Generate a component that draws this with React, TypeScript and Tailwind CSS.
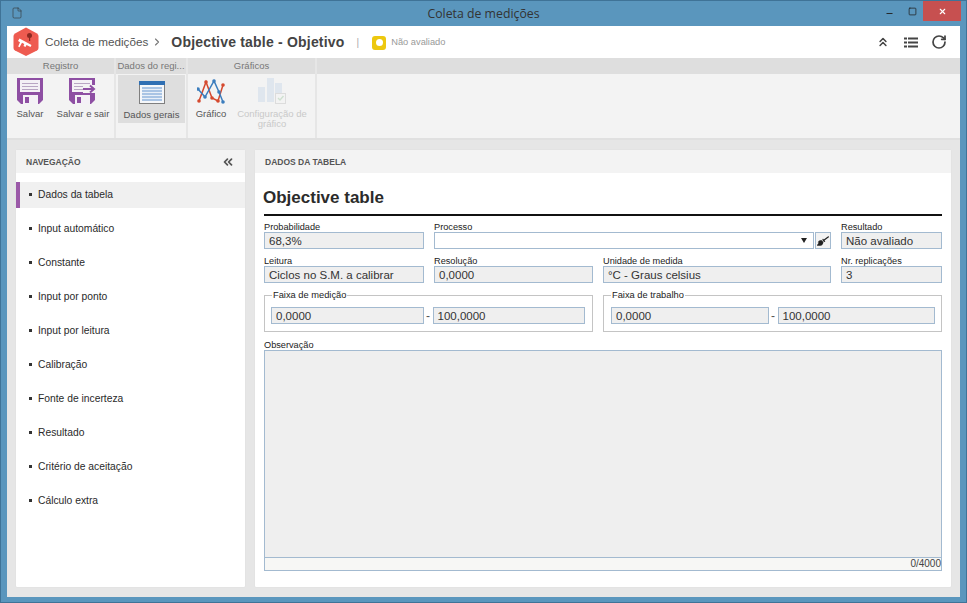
import React from 'react';
import { ChevronsUp, ChevronsLeft, RotateCw, ChevronRight, File, Minus, Square, X } from 'lucide-react';
import { FaBroom } from 'react-icons/fa';

const NAV_ITEMS = [
  'Dados da tabela',
  'Input automático',
  'Constante',
  'Input por ponto',
  'Input por leitura',
  'Calibração',
  'Fonte de incerteza',
  'Resultado',
  'Critério de aceitação',
  'Cálculo extra',
];

const SaveIcon = ({ arrow = false }: { arrow?: boolean }) => (
  <svg width={arrow ? 28 : 26} height="26" viewBox={arrow ? '0 0 28 26' : '0 0 26 26'}>
    <path d="M0 0h26v22l-4 4H4l-4-4z" fill="#8e4fa3" />
    <rect x="3" y="2" width="20" height="12" fill="#f4f1f6" />
    <rect x="5" y="5" width="16" height="1" fill="#b9a6c4" />
    <rect x="5" y="8" width="16" height="1" fill="#b9a6c4" />
    <rect x="5" y="11" width="16" height="1" fill="#b9a6c4" />
    <rect x="6" y="17" width="15" height="9" fill="#f4f1f6" />
    <rect x="8" y="19" width="4" height="6" fill="#8e4fa3" />
    {arrow && (
      <>
        <rect x="14" y="7" width="14" height="8" fill="#f3f3f3" />
        <path d="M14 11h10M21 7.500l4 3.500-4 3.500" stroke="#8e4fa3" strokeWidth="2" fill="none" />
      </>
    )}
  </svg>
);

const TableIcon = () => (
  <svg width="26" height="23" viewBox="0 0 26 23">
    <rect x="0.500" y="0.500" width="25" height="22" fill="#f5f7fa" stroke="#7f7f7f" />
    <rect x="0" y="0" width="26" height="4" fill="#2f6fb3" />
    <rect x="3" y="6" width="20" height="14" fill="#a9c4e4" />
    <path d="M3 8.500h20M3 11.500h20M3 14.500h20M3 17.500h20" stroke="#e8eff8" strokeWidth="1" />
  </svg>
);

const ChartIcon = () => (
  <svg width="28" height="25" viewBox="0 0 28 25">
    <polyline points="2,22 9,3 15,19 21,22 26,6" fill="none" stroke="#d5492e" strokeWidth="1.500" />
    <polyline points="1,10 8,18 17,2 22,13 26,23" fill="none" stroke="#3b7dbd" strokeWidth="1.500" />
    {[[2, 22], [9, 3], [15, 19], [21, 22], [26, 6]].map(([x, y]) => (
      <circle key={`r${x}`} cx={x} cy={y} r="1.800" fill="#d5492e" />
    ))}
    {[[1, 10], [8, 18], [17, 2], [22, 13], [26, 23]].map(([x, y]) => (
      <circle key={`b${x}`} cx={x} cy={y} r="1.800" fill="#3b7dbd" />
    ))}
  </svg>
);

const ChartConfigIcon = () => (
  <svg width="28" height="26" viewBox="0 0 28 26">
    <rect x="0" y="9" width="7" height="15" fill="#dfe6ee" />
    <rect x="9" y="0" width="7" height="24" fill="#dfe6ee" />
    <rect x="17" y="5" width="7" height="12" fill="#dfe6ee" />
    <rect x="17.500" y="15.500" width="10" height="10" fill="#f3f3f3" stroke="#dcdcdc" />
    <path d="M20 20l2 2 3.500-4" fill="none" stroke="#cfe0d0" strokeWidth="1.400" />
  </svg>
);

const Logo = () => (
  <svg width="26" height="30" viewBox="0 0 26 30">
    <path d="M13 0.500l11 6q1.500 1 1.500 2.500v12q0 1.500-1.500 2.500l-11 5.500-11-5.500q-1.500-1-1.500-2.500V9q0-1.500 1.500-2.500z" fill="#ee5b50" />
    <path d="M5 14l1.500-2.500 12 6.500-1 2-4-2-1 2-2-1 .8-2-2.300-1.200-2.500 4.500-1.300-.8 1.800-4.300z" fill="#ffffff" />
    <circle cx="16.500" cy="8.500" r="2.500" fill="#8c2a22" />
    <rect x="16" y="9" width="1.200" height="5" fill="#8c2a22" />
  </svg>
);

const ListIcon = () => (
  <svg width="14" height="11" viewBox="0 0 14 11" fill="#444">
    <rect x="0" y="0.500" width="3" height="2" />
    <rect x="4" y="0.500" width="10" height="2" />
    <rect x="0" y="4.500" width="3" height="2" />
    <rect x="4" y="4.500" width="10" height="2" />
    <rect x="0" y="8.500" width="3" height="2" />
    <rect x="4" y="8.500" width="10" height="2" />
  </svg>
);

const Field = ({ value, className = '' }: { value?: string; className?: string }) => (
  <div className={`h-[17px] border border-[#a3bad0] bg-[#efefef] pl-[4px] text-[11.5px] leading-[17px] text-[#333] whitespace-nowrap ${className}`}>
    {value}
  </div>
);

const Label = ({ text }: { text: string }) => (
  <div className="h-[11px] text-[9.2px] leading-[13px] text-[#222] whitespace-nowrap">{text}</div>
);

const RangeBox = ({ title, a, b, className }: { title: string; a: string; b: string; className: string }) => (
  <div className={`relative h-[37px] border border-[#c4c4c4] flex items-center ${className}`}>
    <span className="absolute left-[7px] -top-[6px] bg-white px-[1px] text-[9.3px] leading-[11px] text-[#222] whitespace-nowrap">{title}</span>
    <Field value={a} className="flex-1 mt-[4px]" />
    <span className="w-[9px] text-center text-[12px] leading-none text-[#555] mt-[4px]">-</span>
    <Field value={b} className="flex-1 mt-[4px]" />
  </div>
);

const RibbonButton = ({ icon, label, active, disabled, className = '' }: { icon: React.ReactNode; label: string; active?: boolean; disabled?: boolean; className?: string }) => (
  <div className={`flex flex-col items-center pt-[4px] ${active ? 'bg-[#dedede] h-[48px]' : ''} ${className}`}>
    <div className="h-[26px] flex items-center justify-center">{icon}</div>
    <div className={`mt-[5px] text-center text-[9.5px] leading-[10px] ${disabled ? 'text-[#c9c9c9]' : 'text-[#555]'}`}>{label}</div>
  </div>
);

const RibbonGroup = ({ title, width, children }: { title: string; width: string; children: React.ReactNode }) => (
  <div className={`${width} flex flex-col border-r-2 border-[#e6e6e6]`}>
    <div className="h-[16px] bg-[#dedede] text-center text-[9.5px] leading-[16px] text-[#777] whitespace-nowrap overflow-hidden">{title}</div>
    <div className="flex-1 flex">{children}</div>
  </div>
);

export default function App() {
  return (
    <div className="w-[967px] h-[603px] flex flex-col bg-[#5a96bd] border border-[#3f7397] font-['Liberation_Sans',Arial,sans-serif] overflow-hidden">
      {/* Title bar */}
      <div className="h-[25px] flex items-start relative shrink-0">
        <File size={12} strokeWidth={1.2} className="ml-[10px] mt-[6px] text-[#333]" />
        <div className="absolute left-0 right-0 top-[5px] text-center font-['Open_Sans',sans-serif] text-[12.3px] leading-[16px] text-[#333]">Coleta de medições</div>
        <div className="ml-auto mr-[5px] flex items-start">
          <Minus size={9} strokeWidth={2.5} className="mt-[8px] text-[#222]" />
          <Square size={9} strokeWidth={2} className="ml-[14px] mt-[6px] text-[#222]" />
          <div className="ml-[6px] w-[38px] h-[20px] bg-[#c75050] flex items-center justify-center">
            <X size={9} strokeWidth={3} className="text-white" />
          </div>
        </div>
      </div>

      <div className="flex-1 mx-[6px] mb-[5px] flex flex-col min-h-0 bg-[#e6e6e6]">
        {/* Header */}
        <div className="h-[32px] bg-white flex items-center pl-[6px] pr-[12px] shrink-0">
          <Logo />
          <span className="ml-[6px] text-[11.7px] text-[#555]">Coleta de medições</span>
          <ChevronRight size={12} strokeWidth={2.2} className="ml-[3px] text-[#777]" />
          <span className="ml-[8px] text-[14px] font-bold tracking-[0.2px] text-[#444]">Objective table - Objetivo</span>
          <span className="ml-[12px] text-[10px] text-[#aaa]">|</span>
          <div className="ml-[13px] mt-[1px] w-[14px] h-[14px] rounded-[3px] bg-[#edc80f] flex items-center justify-center">
            <div className="w-[7px] h-[7px] rounded-full bg-white" />
          </div>
          <span className="ml-[5px] mt-[2px] text-[9.3px] text-[#999]">Não avaliado</span>
          <div className="ml-auto flex items-center text-[#444]">
            <ChevronsUp size={14} strokeWidth={2.6} />
            <div className="ml-[14px]"><ListIcon /></div>
            <RotateCw size={16} strokeWidth={2.6} className="ml-[13px] mr-[1px]" />
          </div>
        </div>

        {/* Ribbon */}
        <div className="h-[82px] flex bg-[#f3f3f3] border-b-2 border-[#e0e0e0] shrink-0">
          <RibbonGroup title="Registro" width="w-[109px]">
            <RibbonButton icon={<SaveIcon />} label="Salvar" className="w-[46px]" />
            <RibbonButton icon={<SaveIcon arrow />} label="Salvar e sair" className="w-[60px]" />
          </RibbonGroup>
          <RibbonGroup title="Dados do regi..." width="w-[72px]">
            <RibbonButton icon={<TableIcon />} label="Dados gerais" active className="w-[67px] ml-[2px] mt-[1px]" />
          </RibbonGroup>
          <RibbonGroup title="Gráficos" width="w-[129px]">
            <RibbonButton icon={<ChartIcon />} label="Gráfico" className="w-[46px]" />
            <RibbonButton icon={<ChartConfigIcon />} label="Configuração de gráfico" disabled className="w-[76px]" />
          </RibbonGroup>
          <div className="flex-1 flex flex-col">
            <div className="h-[16px] bg-[#dedede]" />
          </div>
        </div>

        {/* Body */}
        <div className="flex-1 flex gap-[10px] px-[9px] pt-[10px] pb-[10px] min-h-0">
          {/* Navigation */}
          <div className="w-[229px] bg-white flex flex-col shadow-[0_0_1px_#ccc] rounded-[1px]">
            <div className="h-[23px] bg-[#f3f3f3] flex items-center justify-between pl-[10px] pr-[10px] pt-[1px]">
              <span className="text-[8.5px] font-bold text-[#555]">NAVEGAÇÃO</span>
              <ChevronsLeft size={14} strokeWidth={3} className="text-[#555]" />
            </div>
            <div className="pt-[9px] flex flex-col gap-[8px]">
              {NAV_ITEMS.map((item, i) => (
                <div key={item} className={`h-[26px] flex items-center border-l-4 ${i === 0 ? 'border-[#9b59a8] bg-[#f0f0f0]' : 'border-transparent'}`}>
                  <span className="ml-[9px] -mt-[1px] w-[3px] h-[3px] bg-[#333]" />
                  <span className="ml-[6px] text-[10.3px] text-[#2a2a2a]">{item}</span>
                </div>
              ))}
            </div>
          </div>

          {/* Content */}
          <div className="flex-1 bg-white flex flex-col shadow-[0_0_1px_#ccc] rounded-[1px] min-w-0">
            <div className="h-[23px] bg-[#f3f3f3] flex items-center pl-[10px] pt-[1px]">
              <span className="text-[8.5px] font-bold text-[#555]">DADOS DA TABELA</span>
            </div>
            <div className="flex-1 flex flex-col px-[9px] pb-[16px]">
              <div className="h-[43px] flex items-end border-b-2 border-[#111] pb-[5px]">
                <h1 className="-ml-[1px] text-[17px] leading-[22px] font-bold text-[#2b2b2b]">Objective table</h1>
              </div>

              <div className="mt-[5px] flex gap-[10px]">
                <div className="w-[160px]">
                  <Label text="Probabilidade" />
                  <Field value="68,3%" />
                </div>
                <div className="flex-1">
                  <Label text="Processo" />
                  <div className="flex gap-[1px]">
                    <div className="flex-1 h-[17px] border border-[#a3bad0] bg-white flex items-center justify-end pr-[6px]">
                      <span className="w-0 h-0 border-l-[3.5px] border-r-[3.5px] border-t-[5px] border-l-transparent border-r-transparent border-t-[#222]" />
                    </div>
                    <div className="w-[16px] h-[17px] border border-[#a3bad0] bg-[#f3f3f3] flex items-center justify-center">
                      <FaBroom size={12} className="text-[#222]" />
                    </div>
                  </div>
                </div>
                <div className="w-[101px]">
                  <Label text="Resultado" />
                  <Field value="Não avaliado" />
                </div>
              </div>

              <div className="mt-[6px] flex gap-[10px]">
                <div className="w-[160px]">
                  <Label text="Leitura" />
                  <Field value="Ciclos no S.M. a calibrar" />
                </div>
                <div className="w-[159px]">
                  <Label text="Resolução" />
                  <Field value="0,0000" />
                </div>
                <div className="flex-1">
                  <Label text="Unidade de medida" />
                  <Field value="°C - Graus celsius" />
                </div>
                <div className="w-[101px]">
                  <Label text="Nr. replicações" />
                  <Field value="3" />
                </div>
              </div>

              <div className="mt-[12px] flex gap-[10px]">
                <RangeBox title="Faixa de medição" a="0,0000" b="100,0000" className="w-[329px] pl-[6px] pr-[7px]" />
                <RangeBox title="Faixa de trabalho" a="0,0000" b="100,0000" className="flex-1 pl-[7px] pr-[6px]" />
              </div>

              <div className="mt-[7px] flex-1 flex flex-col min-h-0">
                <Label text="Observação" />
                <div className="flex-1 flex flex-col border border-[#a3bad0]">
                  <div className="flex-1 bg-[#efefef] border-b border-[#a3bad0]" />
                  <div className="h-[12px] bg-[#f7f7f5] text-right text-[10px] leading-[12px] text-[#444]">0/4000</div>
                </div>
              </div>
            </div>
          </div>
        </div>
      </div>
    </div>
  );
}
